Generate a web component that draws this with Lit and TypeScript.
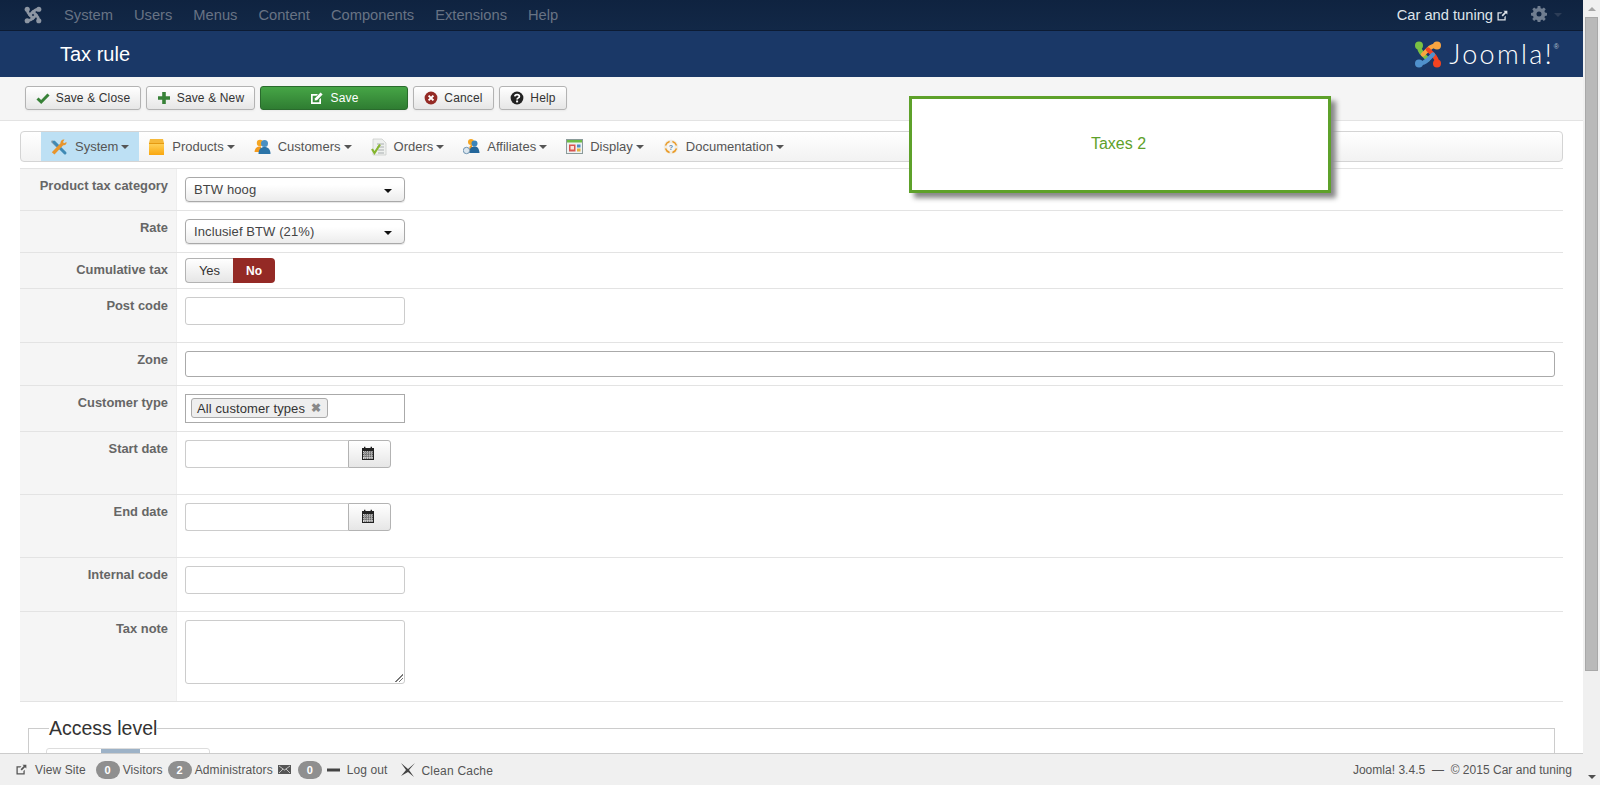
import { LitElement, html, css, svg } from "lit";
import { customElement } from "lit/decorators.js";

const joomlaMark = (a: string, b: string, c: string, d: string) => svg`
  <g fill="none" stroke-width="4.4" stroke-linecap="round">
    <path stroke=${a} d="M5 5 Q5 10 9 14 L14 19"/>
    <path stroke=${b} d="M23 5 Q18 5 14 9 L9 14"/>
    <path stroke=${c} d="M23 23 Q23 18 19 14 L14 9"/>
    <path stroke=${d} d="M5 23 Q10 23 14 19 L19 14"/>
  </g>
  <circle cx="5" cy="5" r="4" fill=${a}/>
  <circle cx="23" cy="5" r="4" fill=${b}/>
  <circle cx="23" cy="23" r="4" fill=${c}/>
  <circle cx="5" cy="23" r="4" fill=${d}/>`;

const ICONS: Record<string, unknown> = {
  check: html`<svg viewBox="0 0 14 14" width="14" height="14"><path d="M1.5 7.5 L5.2 11 L12.5 3.5" fill="none" stroke="#378137" stroke-width="3"/></svg>`,
  plus: html`<svg viewBox="0 0 14 14" width="14" height="14"><path d="M5.2 1h3.6v4.2H13v3.6H8.8V13H5.2V8.8H1V5.2h4.2z" fill="#378137"/></svg>`,
  edit: html`<svg viewBox="0 0 14 14" width="14" height="14"><path d="M1 3h7L6.5 4.7H2.7v6.6h6.6V8.5L11 7v6H1z" fill="#fff"/><path d="M5 7.2 10.6 1.6 12.6 3.6 7 9.2 4.6 9.6z" fill="#fff"/></svg>`,
  cancel: html`<svg viewBox="0 0 14 14" width="14" height="14"><circle cx="7" cy="7" r="6.4" fill="#942a25"/><path d="M4.6 4.6 9.4 9.4M9.4 4.6 4.6 9.4" stroke="#fff" stroke-width="2"/></svg>`,
  help: html`<svg viewBox="0 0 14 14" width="14" height="14"><circle cx="7" cy="7" r="6.4" fill="#222"/><path d="M4.8 5.4C5 2.9 9.4 3 9.4 5.4 9.4 7 7.1 6.8 7.1 8.6" fill="none" stroke="#fff" stroke-width="1.7"/><rect x="6.1" y="9.5" width="2" height="1.9" fill="#fff"/></svg>`,
  system: html`<svg viewBox="0 0 18 18" width="18" height="18"><path d="M2 2 L8 8 L6.5 9.5 L1 4z" fill="#8a9aa6"/><path d="M4 4 L15 15" stroke="#3f8ab5" stroke-width="3" stroke-linecap="round"/><path d="M14.5 1.5 13 4l1 1.2 2.5-1.3c.4 2-1.300 3.800-3.300 3.300L4.500 16.500 1.800 14.300 10.500 5.200C10 3 12.300 .9 14.500 1.500z" fill="#e8952c"/></svg>`,
  products: html`<svg viewBox="0 0 17 18" width="17" height="18"><defs><linearGradient id="pg" x1="0" x2="0" y1="0" y2="1"><stop offset="0" stop-color="#ffd35c"/><stop offset="1" stop-color="#f9a70f"/></linearGradient></defs><path d="M2 1h13l1 4H1z" fill="#f6b93a"/><rect x="1" y="5" width="15" height="12" fill="url(#pg)"/><rect x="1" y="5" width="15" height="1" fill="#e59a12"/></svg>`,
  customers: html`<svg viewBox="0 0 17 17" width="17" height="17"><circle cx="6" cy="5" r="3.2" fill="#f5a623"/><path d="M0.500 14C1 9 4 8 7 8.500V14z" fill="#f39a1c"/><circle cx="10.500" cy="5.500" r="3.500" fill="#4a90c2"/><path d="M4.500 16C4.500 10 8 9 10.500 9S16.500 10 16.500 16z" fill="#2b74a8"/></svg>`,
  orders: html`<svg viewBox="0 0 16 18" width="16" height="18"><path d="M2 1h9l4 4v12H2z" fill="#eef0ee" stroke="#c5c8c5" stroke-width=".7"/><path d="M6 6h7M6 9h7M7 12h6M7 15h6" stroke="#a9aeb0"/><path d="M1 11 3.500 15 9 6.500" fill="none" stroke="#85b52e" stroke-width="2.200"/></svg>`,
  affiliates: html`<svg viewBox="0 0 17 17" width="17" height="17"><circle cx="8" cy="4" r="3" fill="#f5a623"/><path d="M6 14c0-6 1-7 3-7v7z" fill="#f39a1c"/><circle cx="11.500" cy="5.500" r="3" fill="#3a84ba"/><path d="M6 15c1-6 3-6.500 5.500-6.500s4.500 1 5 6.500z" fill="#24679b"/><circle cx="3.500" cy="12.500" r="3.200" fill="#dbe6ef" stroke="#6e93b0"/></svg>`,
  display: html`<svg viewBox="0 0 17 17" width="17" height="17"><rect x=".5" y="1.500" width="16" height="14" fill="#eef2f2" stroke="#8a9a9a"/><rect x="1" y="2" width="15" height="2.500" fill="#6cbb45"/><rect x="3" y="6.500" width="6.500" height="7" fill="#d9544f"/><rect x="4.500" y="8" width="3.500" height="3.500" fill="#fbe3d8"/><rect x="11" y="6.500" width="3.500" height="3" fill="#4d8ec4"/><rect x="11" y="10.500" width="3.500" height="3" fill="#e2b13c"/></svg>`,
  docs: html`<svg viewBox="0 0 16 16" width="16" height="16"><circle cx="8" cy="8" r="5.500" fill="none" stroke="#f0ece2" stroke-width="3.600"/><path d="M4 4 2.500 6.500A6 6 0 0 1 6.500 2.500zM12 4l1.500 2.500A6 6 0 0 0 9.500 2.500zM4 12l-1.500-2.500A6 6 0 0 0 6.500 13.500zM12 12l1.500-2.500A6 6 0 0 1 9.500 13.500z" fill="#ea9a25" stroke="#ea9a25" stroke-width="1.400"/><text x="8" y="10.500" font-size="7" font-weight="700" font-family="Liberation Sans" text-anchor="middle" fill="#5a86a8">?</text></svg>`,
  cal: html`<svg viewBox="0 0 14 14" width="14" height="14"><path d="M1 2h2V.8h1.400V2h5.200V.8H11V2h2v12H1z" fill="#222"/><rect x="2" y="5" width="10" height="8" fill="#d9d9d9"/><path d="M2 6.700h10M2 8.500h10M2 10.300h10M3.800 5v8M5.600 5v8M7.400 5v8M9.200 5v8M11 5v8" stroke="#333" stroke-width=".8" stroke-dasharray="1 .8"/></svg>`,
  ext: html`<svg viewBox="0 0 12 12" width="11" height="11"><path d="M.500 2.500h5.500L4.600 3.900H1.900v6.200h6.200V7.600l1.400-1.400v5.300H.500z" fill="currentColor"/><path d="M7 .700h4.300V5L9.800 3.500 6.300 7 5 5.700 8.500 2.200z" fill="currentColor"/></svg>`,
};

interface Row { label: string; cls: string; kind: string; value?: string; }
const ROWS: Row[] = [
  { label: "Product tax category", cls: "h42", kind: "select", value: "BTW hoog" },
  { label: "Rate", cls: "h42", kind: "select", value: "Inclusief BTW (21%)" },
  { label: "Cumulative tax", cls: "h35", kind: "toggle" },
  { label: "Post code", cls: "h54", kind: "input" },
  { label: "Zone", cls: "h43", kind: "wide" },
  { label: "Customer type", cls: "h46", kind: "tags" },
  { label: "Start date", cls: "h63", kind: "date" },
  { label: "End date", cls: "h63", kind: "date" },
  { label: "Internal code", cls: "h54", kind: "input" },
  { label: "Tax note", cls: "h90", kind: "textarea" },
];

const MENU = [
  ["system", "System"], ["products", "Products"], ["customers", "Customers"], ["orders", "Orders"],
  ["affiliates", "Affiliates"], ["display", "Display"], ["docs", "Documentation"],
];

@customElement("app-root")
export class AppRoot extends LitElement {
  static styles = css`
    :host { display: flex; width: 1600px; height: 785px; overflow: hidden; position: relative;
      font-family: "Liberation Sans", Arial, sans-serif; font-size: 13px; color: #555; background: #fff; }
    .main { width: 1583px; height: 785px; overflow: hidden; position: relative; flex: none; }
    .nav { height: 31px; box-sizing: border-box; background: linear-gradient(#0f2340, #122847); border-bottom: 1px solid #0c1b33;
      display: flex; align-items: center; font-size: 14.700px; color: #687384; }
    .nav .mark { width: 18px; height: 18px; margin: 0 12px 0 24px; flex: none; }
    .nav .link { margin: 0 10.500px; }
    .nav .link:first-of-type { margin-left: 10px; }
    .nav .spacer { flex: 1; }
    .nav .site { color: #dfe4ea; display: flex; align-items: center; gap: 4px; margin-right: 23px; font-size: 14.700px; }
    .nav .gear { width: 16px; height: 16px; color: #6f7d90; margin-right: 7px; margin-top: -3px; }
    .nav .dcaret { width: 0; height: 0; border: 4px solid transparent; border-top-color: #2c3d57; border-bottom: 0; margin-right: 21px; }
    .head { height: 46px; background: #1a3867; display: flex; align-items: center; justify-content: space-between; }
    .head h1 { margin: 0 0 0 60px; font-size: 20px; font-weight: 400; color: #fff; }
    .logo { display: flex; align-items: center; margin-right: 24px; color: #fff; gap: 7px; }
    .logo svg { width: 28px; height: 29px; }
    .logo span { font-family: "Lato", sans-serif; font-weight: 300; font-size: 27px; letter-spacing: 2.300px; line-height: 30px; }
    .logo sup { font-size: 7px; color: #b8c2d0; align-self: flex-start; margin: 4px 0 0 -7px; line-height: 8px; }
    .bar { height: 44px; box-sizing: border-box; background: #f5f5f5; border-bottom: 1px solid #e3e3e3;
      padding: 9px 0 0 25px; display: flex; gap: 5px; align-items: flex-start; }
    .btn { height: 24px; box-sizing: border-box; border: 1px solid #b3b3b3; border-radius: 3px; display: flex; align-items: center; justify-content: center; gap: 6px;
      background: linear-gradient(#fff, #e6e6e6); color: #333; font-size: 12px; letter-spacing: .15px; box-shadow: 0 1px 2px rgba(0,0,0,.05); }
    .btn.b1 { width: 116px; } .btn.b2 { width: 109px; } .btn.b3 { width: 148px; } .btn.b4 { width: 81px; } .btn.b5 { width: 68px; }
    .btn.green { background: linear-gradient(#46a546, #2f7d32); border-color: #2a6b2d; color: #fff; gap: 7px; }
    .menu { margin: 10px 20px 0 20px; height: 31px; box-sizing: border-box; border: 1px solid #d4d4d4; border-radius: 4px;
      background: linear-gradient(#fff, #f2f2f2); display: flex; padding-left: 20px; }
    .mi { display: flex; align-items: center; padding: 0 10px 0 9px; color: #555; }
    .mi svg { flex: none; margin-right: 7px; }
    .mi.active { background: #bde0f4; }
    .mcaret { width: 0; height: 0; border: 4px solid transparent; border-top-color: #555; border-bottom: 0; margin-left: 3px; margin-top: 1px; }
    .form { margin: 6px 20px 0 20px; border-top: 1px solid #e3e3e3; }
    .row { display: grid; grid-template-columns: 157px 1fr; border-bottom: 1px solid #e3e3e3; box-sizing: border-box; }
    .h42 { height: 42px; } .h35 { height: 36px; } .h54 { height: 54px; } .h43 { height: 43px; }
    .h46 { height: 46px; } .h63 { height: 63px; } .h90 { height: 89.500px; }
    .lab { background: #f5f5f5; border-right: 1px solid #eee; text-align: right; font-weight: 700; font-size: 12.900px; color: #666; padding: 9px 8px 0 0; line-height: 16px; }
    .ctl { padding: 8px 0 0 8px; min-width: 0; }
    .ctl.tight { padding-top: 5px; }
    .select { width: 220px; height: 25px; box-sizing: border-box; border: 1px solid #a9a9a9; border-radius: 4px; background: linear-gradient(#fff 30%, #ececec);
      display: flex; align-items: center; justify-content: space-between; padding: 0 12px 0 8px; color: #444; font-size: 13px; box-shadow: 0 1px 1px rgba(0,0,0,.1); letter-spacing: .1px; }
    .scaret { width: 0; height: 0; border: 4px solid transparent; border-top-color: #111; border-bottom: 0; margin-top: 2px; }
    .toggle { display: flex; width: 90px; height: 25px; box-sizing: border-box; font-size: 13px; }
    .toggle span { display: flex; align-items: center; justify-content: center; box-sizing: border-box; }
    .yes { width: 48px; border: 1px solid #b3b3b3; border-right: 0; border-radius: 4px 0 0 4px; background: linear-gradient(#fff, #e6e6e6); color: #333; }
    .no { width: 42px; background: #942a25; color: #fff; border-radius: 0 4px 4px 0; font-weight: 700; font-size: 12px; }
    .input { width: 220px; height: 27.500px; box-sizing: border-box; border: 1px solid #ccc; border-radius: 3px; background: #fff; }
    .wide { width: 1370px; height: 26px; box-sizing: border-box; border: 1px solid #aaa; border-radius: 3px; }
    .tags { width: 220px; height: 29px; box-sizing: border-box; border: 1px solid #aaa; padding: 3px 5px; }
    .tag { display: inline-flex; align-items: center; height: 20px; box-sizing: border-box; border: 1px solid #aaa; border-radius: 3px; background: #eee; padding: 0 6px 0 5px; gap: 6px; color: #333; font-size: 13px; letter-spacing: .1px; }
    .tag b { color: #888; font-size: 12px; line-height: 1; }
    .date { display: flex; }
    .date .in { width: 163px; height: 28px; box-sizing: border-box; border: 1px solid #ccc; border-right: 0; border-radius: 3px 0 0 3px; }
    .date .cal { width: 43px; height: 28px; box-sizing: border-box; border: 1px solid #b3b3b3; border-radius: 0 3px 3px 0; background: linear-gradient(#fff, #e6e6e6); display: flex; align-items: center; justify-content: center; padding: 0 3px 3px 0; }
    .area { width: 220px; height: 64px; box-sizing: border-box; border: 1px solid #ccc; border-radius: 3px; position: relative; }
    .grip { position: absolute; right: 1px; bottom: 1px; width: 8px; height: 8px; background: linear-gradient(135deg, transparent 50%, #777 50%, #777 58%, transparent 58%, transparent 72%, #777 72%, #777 80%, transparent 80%); }
    fieldset { margin: 14px 28px 0 28px; padding: 0; border: 1px solid #ccc; border-bottom: 0; height: 70px; position: relative; }
    legend { margin-left: 20px; padding: 0 0 2px 0; font-size: 19.500px; color: #333; line-height: 24px; width: 108px; white-space: nowrap; }
    .tabs { margin: 6px 0 0 17px; width: 164px; height: 30px; border: 1px solid #ddd; border-radius: 3px; box-sizing: border-box; padding-left: 54px; }
    .tabs i { display: block; width: 39px; height: 7px; background: #9db2c7; }
    .foot { position: absolute; left: 0; right: 0; bottom: 0; height: 32px; box-sizing: border-box; background: #f0f0f0; border-top: 1px solid #ccc;
      display: flex; align-items: center; justify-content: space-between; padding: 0 11px 0 16px; font-size: 12px; color: #555; letter-spacing: .1px; }
    .fr { letter-spacing: .02px; }
    .fl { display: flex; align-items: center; }
    .fl svg { flex: none; }
    .badge { display: inline-flex; align-items: center; justify-content: center; width: 24px; height: 18px; border-radius: 9px; background: #8f8f8f; color: #fff; font-weight: 700; font-size: 11px; }
    .ml7 { margin-left: 7px; } .ml3 { margin-left: 3px; } .ml5 { margin-left: 5px; } .ml6 { margin-left: 6px; } .ml8 { margin-left: 8px; } .ml10 { margin-left: 10px; } .ml12 { margin-left: 12px; }
    .clean { position: relative; top: 1px; letter-spacing: .2px; }
    .tip { position: absolute; left: 909px; top: 96px; width: 422px; height: 97px; box-sizing: border-box; background: #fff; border: 3px solid #5ea12a;
      box-shadow: 5px 5px 5px #888; display: flex; align-items: center; justify-content: center; color: #5ea12a; font-size: 16px; padding: 0 3px 1px 0; }
    .scroll { width: 17px; height: 785px; background: #f0f0f0; display: flex; flex-direction: column; align-items: center; flex: none; }
    .up, .down { height: 17px; display: flex; align-items: center; justify-content: center; flex: none; }
    .up i { border: 4px solid transparent; border-bottom: 4px solid #a6a6a6; border-top: 0; }
    .down i { border: 4px solid transparent; border-top: 4px solid #505050; border-bottom: 0; }
    .thumb { width: 13px; height: 654px; background: #b9b9b9; border: 1px solid #a8a8a8; box-sizing: border-box; flex: none; }
    .track { flex: 1; }
  `;

  private control(r: Row) {
    switch (r.kind) {
      case "select": return html`<div class="ctl"><div class="select"><span>${r.value}</span><span class="scaret"></span></div></div>`;
      case "toggle": return html`<div class="ctl tight"><div class="toggle"><span class="yes">Yes</span><span class="no">No</span></div></div>`;
      case "input": return html`<div class="ctl"><div class="input"></div></div>`;
      case "wide": return html`<div class="ctl"><div class="wide"></div></div>`;
      case "tags": return html`<div class="ctl"><div class="tags"><span class="tag">All customer types <b>✖</b></span></div></div>`;
      case "date": return html`<div class="ctl"><div class="date"><div class="in"></div><div class="cal">${ICONS.cal}</div></div></div>`;
      default: return html`<div class="ctl"><div class="area"><span class="grip"></span></div></div>`;
    }
  }

  render() {
    return html`
      <div class="main">
        <div class="nav">
          <svg class="mark" viewBox="0 0 28 28">${joomlaMark("#8d96a3", "#8d96a3", "#8d96a3", "#8d96a3")}</svg>
          ${["System", "Users", "Menus", "Content", "Components", "Extensions", "Help"].map((t) => html`<span class="link">${t}</span>`)}
          <span class="spacer"></span>
          <span class="site">Car and tuning ${ICONS.ext}</span>
          <svg class="gear" viewBox="0 0 16 16"><path fill="currentColor" fill-rule="evenodd" d="M6.700 0h2.600l.4 2.200 1.400.6L12.900 1.500l1.800 1.800-1.300 1.800.6 1.400 2 .4v2.600l-2 .4-.6 1.400 1.300 1.800-1.800 1.800-1.800-1.300-1.400.6-.4 2H6.700l-.4-2-1.400-.6-1.800 1.300-1.800-1.800 1.300-1.800-.6-1.400-2-.4V6.900l2-.4.6-1.400L1.300 3.300 3.100 1.500 4.900 2.800l1.400-.6zM8 5.500a2.500 2.500 0 1 0 0 5 2.500 2.500 0 0 0 0-5z"/></svg>
          <span class="dcaret"></span>
        </div>
        <div class="head">
          <h1>Tax rule</h1>
          <div class="logo">
            <svg viewBox="0 0 28 28">${joomlaMark("#7ac143", "#f9a541", "#f44321", "#5091cd")}</svg>
            <span>Joomla!</span><sup>®</sup>
          </div>
        </div>
        <div class="bar">
          <div class="btn b1">${ICONS.check}Save &amp; Close</div>
          <div class="btn b2">${ICONS.plus}Save &amp; New</div>
          <div class="btn b3 green">${ICONS.edit}Save</div>
          <div class="btn b4">${ICONS.cancel}Cancel</div>
          <div class="btn b5">${ICONS.help}Help</div>
        </div>
        <div class="menu">
          ${MENU.map(([ic, t], i) => html`<div class="mi ${i === 0 ? "active" : ""}">${ICONS[ic]}<span>${t}</span><span class="mcaret"></span></div>`)}
        </div>
        <div class="form">
          ${ROWS.map((r) => html`<div class="row ${r.cls}"><div class="lab">${r.label}</div>${this.control(r)}</div>`)}
        </div>
        <fieldset>
          <legend>Access level</legend>
          <div class="tabs"><i></i></div>
        </fieldset>
        <div class="tip">Taxes 2</div>
        <div class="foot">
          <div class="fl">
            ${ICONS.ext}<span class="ml8">View Site</span>
            <span class="badge ml10">0</span><span class="ml3">Visitors</span>
            <span class="badge ml5">2</span><span class="ml3">Administrators</span>
            <svg class="ml5" width="13" height="9" viewBox="0 0 13 9"><path d="M0 0h13v9H0z" fill="#555"/><path d="M1 1l5.500 4L12 1M1 8l4-4M12 8 8 4" stroke="#ddd" fill="none" stroke-width=".8"/></svg>
            <span class="badge ml7">0</span>
            <svg class="ml5" width="13" height="4" viewBox="0 0 13 4"><rect width="13" height="3" y=".5" fill="#444"/></svg>
            <span class="ml7">Log out</span>
            <svg class="ml12" width="16" height="16" viewBox="0 0 16 16"><path d="M1 1 8 7 15 1 9 8l5 7-6-5-7 4 5-6z" fill="#444"/></svg>
            <span class="ml6 clean">Clean Cache</span>
          </div>
          <div class="fr">Joomla! 3.4.5 &nbsp;— &nbsp;© 2015 Car and tuning</div>
        </div>
      </div>
      <div class="scroll">
        <div class="up"><i></i></div>
        <div class="thumb"></div>
        <div class="track"></div>
        <div class="down"><i></i></div>
      </div>
    `;
  }
}
